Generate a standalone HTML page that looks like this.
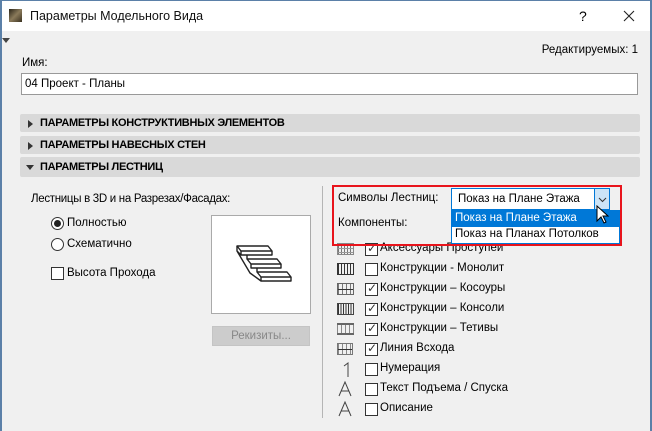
<!DOCTYPE html>
<html><head><meta charset="utf-8"><style>
*{margin:0;padding:0;box-sizing:border-box}
body{width:652px;height:431px;overflow:hidden;background:#f0f0f0;font-family:"Liberation Sans","DejaVu Sans",sans-serif;font-size:11.5px;color:#000;position:relative}
.a{position:absolute;white-space:nowrap}
.bar{position:absolute;left:20px;width:620px;background:#d9d9d9;border-radius:2px;font-weight:bold;font-size:11px;letter-spacing:-0.3px;padding-left:20px;line-height:19px}
.tri{position:absolute;left:8px;top:6px;width:0;height:0;border-top:4px solid transparent;border-bottom:4px solid transparent;border-left:5px solid #333}
.trid{position:absolute;left:6px;top:8px;width:0;height:0;border-left:4px solid transparent;border-right:4px solid transparent;border-top:5px solid #333}
.cb{position:absolute;width:13px;height:13px;border:1px solid #333;background:#fff}
.cb span{position:absolute;left:1px;top:-3px;font-size:12px;color:#333}
.rows .t{position:absolute;left:380px}
</style></head><body>
<div class="a" style="left:0;top:0;width:652px;height:31px;background:#fff"></div>
<div class="a" style="left:0;top:0;width:2px;height:431px;background:#5b80a8"></div>
<div class="a" style="right:0;top:0;width:2px;height:431px;background:#5b80a8"></div>
<div class="a" style="left:0;top:0;width:652px;height:1px;background:#5b80a8"></div>
<div class="a" style="left:9px;top:9px;width:13px;height:13px;background:linear-gradient(135deg,#2a2418,#8a7a5a 50%,#3a3020)"></div>
<div class="a" style="left:30px;top:9px;font-size:12.5px;color:#111">Параметры Модельного Вида</div>
<div class="a" style="left:579px;top:8px;font-size:14px">?</div>
<svg class="a" style="left:623px;top:10px" width="12" height="12"><path d="M1 1L11 11M11 1L1 11" stroke="#222" stroke-width="1.1"/></svg>
<div class="a" style="left:2px;top:38px;border-left:4px solid transparent;border-right:4px solid transparent;border-top:5px solid #444"></div>
<div class="a" style="right:14px;top:44px">Редактируемых: 1</div>
<div class="a" style="left:22px;top:57px">Имя:</div>
<div class="a" style="left:21px;top:73px;width:617px;height:22px;background:#fff;border:1px solid #999;padding:4px 0 0 3px">04 Проект - Планы</div>
<div class="bar" style="top:114px;height:18px"><span class="tri"></span>ПАРАМЕТРЫ КОНСТРУКТИВНЫХ ЭЛЕМЕНТОВ</div>
<div class="bar" style="top:136px;height:18px"><span class="tri"></span>ПАРАМЕТРЫ НАВЕСНЫХ СТЕН</div>
<div class="bar" style="top:157px;height:20px;line-height:21px"><span class="trid"></span>ПАРАМЕТРЫ ЛЕСТНИЦ</div>

<div class="a" style="left:31px;top:193px;letter-spacing:-0.3px">Лестницы в 3D и на Разрезах/Фасадах:</div>
<div class="a" style="left:51px;top:217px;width:13px;height:13px;border:1px solid #333;border-radius:50%;background:#fff"><div style="position:absolute;left:2px;top:2px;width:7px;height:7px;border-radius:50%;background:#222"></div></div>
<div class="a" style="left:67px;top:217px">Полностью</div>
<div class="a" style="left:51px;top:238px;width:13px;height:13px;border:1px solid #333;border-radius:50%;background:#fff"></div>
<div class="a" style="left:67px;top:238px">Схематично</div>
<div class="cb" style="left:51px;top:267px"></div>
<div class="a" style="left:67px;top:267px">Высота Прохода</div>
<div class="a" style="left:211px;top:215px;width:100px;height:99px;background:#fff;border:1px solid #aaa">
<svg width="100" height="99" viewBox="0 0 100 99"><g fill="none" stroke="#222" stroke-width="1.4" stroke-linejoin="round">
<path d="M25 30h31l4 5H29z"/><path d="M29 35v4h31v-4"/>
<path d="M35 39v4M35 43h30l4 5H39z"/><path d="M39 48v4h30v-4"/>
<path d="M45 52v4M45 56h30l4 5H49z"/><path d="M49 61v4h30v-4"/>
<path d="M25 30v5l4 4M25 35l13 22l11 8"/>
</g></svg></div>
<div class="a" style="left:212px;top:326px;width:98px;height:20px;background:#cccccc;border:1px solid #c4c4c4;color:#888;text-align:center;line-height:18px">Рекизиты...</div>
<div class="a" style="left:322px;top:186px;width:1px;height:232px;background:#b5b5b5"></div>

<div class="a" style="left:338px;top:192px">Символы Лестниц:</div>
<div class="a" style="left:338px;top:217px">Компоненты:</div>
<div class="rows">
<div class="a" style="left:337px;top:243px;width:17px;height:12px;border:1px solid #888;background:linear-gradient(transparent 4px,#999 4px 5px,transparent 5px 8px,#999 8px 9px,transparent 9px),repeating-linear-gradient(90deg,#777 0 1px,transparent 1px 3px)"></div><div class="cb" style="left:365px;top:243px"><span>✓</span></div><div class="a t" style="top:242px">Аксессуары Проступей</div>
<div class="a" style="left:337px;top:263px;width:17px;height:12px;border:1px solid #333;background:repeating-linear-gradient(90deg,#333 0 1px,transparent 1px 3px)"></div><div class="cb" style="left:365px;top:263px"></div><div class="a t" style="top:262px">Конструкции - Монолит</div>
<div class="a" style="left:337px;top:283px;width:17px;height:12px;border:1px solid #666;background:linear-gradient(transparent 5px,#333 5px 6px,transparent 6px),repeating-linear-gradient(90deg,#777 0 1px,transparent 1px 4px)"></div><div class="cb" style="left:365px;top:283px"><span>✓</span></div><div class="a t" style="top:282px">Конструкции – Косоуры</div>
<div class="a" style="left:337px;top:303px;width:17px;height:12px;border:1px solid #444;background:repeating-linear-gradient(90deg,#333 0 1px,transparent 1px 2.5px)"></div><div class="cb" style="left:365px;top:303px"><span>✓</span></div><div class="a t" style="top:302px">Конструкции – Консоли</div>
<div class="a" style="left:337px;top:323px;width:17px;height:12px;border-top:2px solid #666;border-bottom:2px solid #666;background:repeating-linear-gradient(90deg,#888 0 1px,transparent 1px 4px)"></div><div class="cb" style="left:365px;top:323px"><span>✓</span></div><div class="a t" style="top:322px">Конструкции – Тетивы</div>
<div class="a" style="left:337px;top:343px;width:16px;height:12px;border:1px solid #777;background:linear-gradient(transparent 5px,#333 5px 6px,transparent 6px),repeating-linear-gradient(90deg,#888 0 1px,transparent 1px 4px)"></div><div class="cb" style="left:365px;top:343px"><span>✓</span></div><div class="a t" style="top:342px">Линия Всхода</div>
<svg class="a" style="left:339px;top:361px" width="16" height="18"><path d="M5 5L9 2V16" fill="none" stroke="#444" stroke-width="1"/></svg><div class="cb" style="left:365px;top:363px"></div><div class="a t" style="top:362px">Нумерация</div>
<svg class="a" style="left:337px;top:380px" width="16" height="18"><path d="M2 16L8 2L14 16M4.5 11H11.5" fill="none" stroke="#444" stroke-width="1"/></svg><div class="cb" style="left:365px;top:383px"></div><div class="a t" style="top:382px">Текст Подъема / Спуска</div>
<svg class="a" style="left:337px;top:400px" width="16" height="18"><path d="M2 16L8 2L14 16M4.5 11H11.5" fill="none" stroke="#444" stroke-width="1"/></svg><div class="cb" style="left:365px;top:403px"></div><div class="a t" style="top:402px">Описание</div>
</div>

<div class="a" style="left:451px;top:188px;width:159px;height:22px;background:#fff;border:1px solid #0078d7;padding:4px 0 0 6px">Показ на Плане Этажа</div>
<div class="a" style="left:594px;top:189px;width:15px;height:20px;background:#cce4f7;border-left:1px solid #0078d7"><svg width="15" height="20"><path d="M4 9l3.5 3.5L11 9" fill="none" stroke="#333"/></svg></div>
<div class="a" style="left:451px;top:210px;width:169px;height:34px;background:#fff;border:1px solid #0078d7"></div>
<div class="a" style="left:452px;top:211px;width:167px;height:16px;background:#0078d7;color:#fff;padding:1px 0 0 3px">Показ на Плане Этажа</div>
<div class="a" style="left:455px;top:228px">Показ на Планах Потолков</div>
<div class="a" style="left:332px;top:185px;width:290px;height:61px;border:2px solid #e8141c"></div>
<svg class="a" style="left:596px;top:205px" width="14" height="20" viewBox="0 0 14 20"><path d="M1 1v15l4-4 3 6 2-1-3-6h5z" fill="#fff" stroke="#000"/></svg>
</body></html>
